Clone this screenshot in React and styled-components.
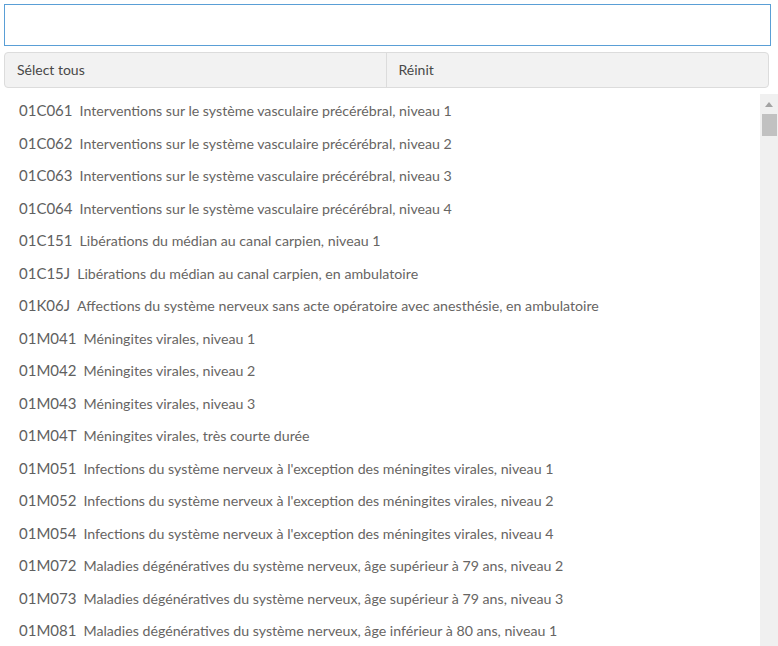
import React from 'react'
import styled, { createGlobalStyle } from 'styled-components'

const GlobalStyle = createGlobalStyle`
  html, body {
    margin: 0;
    padding: 0;
    height: 100%;
    overflow: hidden;
    background: #fff;
  }
  #root {
    height: 100%;
  }
`

const items = [
  ['01C061', 'Interventions sur le système vasculaire précérébral, niveau 1'],
  ['01C062', 'Interventions sur le système vasculaire précérébral, niveau 2'],
  ['01C063', 'Interventions sur le système vasculaire précérébral, niveau 3'],
  ['01C064', 'Interventions sur le système vasculaire précérébral, niveau 4'],
  ['01C151', 'Libérations du médian au canal carpien, niveau 1'],
  ['01C15J', 'Libérations du médian au canal carpien, en ambulatoire'],
  ['01K06J', 'Affections du système nerveux sans acte opératoire avec anesthésie, en ambulatoire'],
  ['01M041', 'Méningites virales, niveau 1'],
  ['01M042', 'Méningites virales, niveau 2'],
  ['01M043', 'Méningites virales, niveau 3'],
  ['01M04T', 'Méningites virales, très courte durée'],
  ['01M051', "Infections du système nerveux à l'exception des méningites virales, niveau 1"],
  ['01M052', "Infections du système nerveux à l'exception des méningites virales, niveau 2"],
  ['01M054', "Infections du système nerveux à l'exception des méningites virales, niveau 4"],
  ['01M072', 'Maladies dégénératives du système nerveux, âge supérieur à 79 ans, niveau 2'],
  ['01M073', 'Maladies dégénératives du système nerveux, âge supérieur à 79 ans, niveau 3'],
  ['01M081', 'Maladies dégénératives du système nerveux, âge inférieur à 80 ans, niveau 1']
]

const App = () => {
  return (
    <Page>
      <GlobalStyle />
      <SearchInput type="text" />
      <ButtonBar>
        <BarButton>Sélect tous</BarButton>
        <BarButton>Réinit</BarButton>
      </ButtonBar>
      <ListBox>
        <List>
          {items.map(([code, label]) => (
            <Row key={code}>
              <Code>{code}</Code>
              <Label>{label}</Label>
            </Row>
          ))}
        </List>
        <ScrollTrack>
          <ScrollArrow>
            <svg width="8" height="5" viewBox="0 0 8 5">
              <polygon points="0,5 4,0 8,5" fill="#a3a3a3" />
            </svg>
          </ScrollArrow>
          <ScrollThumb />
        </ScrollTrack>
      </ListBox>
    </Page>
  )
}

const Page = styled.div`
  height: 100%;
  box-sizing: border-box;
  padding-top: 4px;
  display: flex;
  flex-direction: column;
  font-family: 'Lato', 'Open Sans', sans-serif;
`

const SearchInput = styled.input`
  margin-left: 4px;
  width: 767px;
  height: 42px;
  box-sizing: border-box;
  border: 1px solid #5a9fd6;
  outline: none;
  padding: 0 10px;
  font-family: inherit;
  font-size: 14px;
  flex-shrink: 0;
`

const ButtonBar = styled.div`
  margin: 6px 0 0 4px;
  width: 765px;
  height: 36px;
  box-sizing: border-box;
  display: grid;
  grid-template-columns: 1fr 1fr;
  border: 1px solid #dcdcdc;
  border-radius: 4px;
  background: #f2f2f2;
  overflow: hidden;
  flex-shrink: 0;
`

const BarButton = styled.button`
  border: none;
  background: transparent;
  text-align: left;
  padding: 0 12px 1px;
  font-family: inherit;
  font-size: 14px;
  color: #484848;
  &:first-child {
    border-right: 1px solid #dcdcdc;
  }
`

const ListBox = styled.div`
  margin-top: 6px;
  flex: 1;
  min-height: 0;
  display: flex;
`

const List = styled.div`
  flex: 1;
  overflow: hidden;
  padding-left: 19px;
`

const Row = styled.div`
  height: 32.5px;
  display: flex;
  align-items: baseline;
  padding-top: 7px;
  box-sizing: border-box;
  white-space: nowrap;
`

const Code = styled.span`
  font-size: 15px;
  color: #606060;
  margin-right: 7px;
`

const Label = styled.span`
  font-size: 14.2px;
  color: #676563;
`

const ScrollTrack = styled.div`
  width: 18px;
  flex-shrink: 0;
  background: #f0f0f0;
  display: flex;
  flex-direction: column;
  align-items: flex-end;
`

const ScrollArrow = styled.div`
  width: 18px;
  height: 20px;
  display: flex;
  justify-content: center;
  align-items: flex-start;
  padding-top: 8px;
  box-sizing: border-box;
`

const ScrollThumb = styled.div`
  width: 15px;
  height: 22px;
  margin-right: 1px;
  background: #c1c1c1;
`

export default App
